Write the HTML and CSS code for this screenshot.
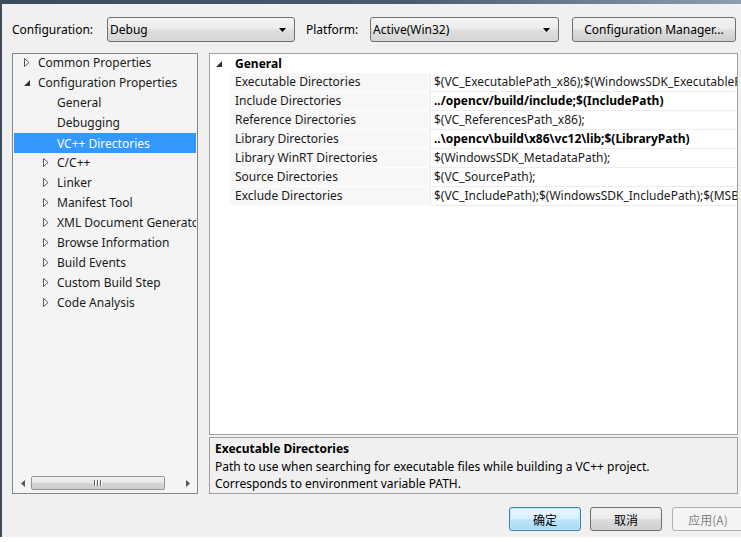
FILE: index.html
```html
<!DOCTYPE html>
<html>
<head>
<meta charset="utf-8">
<link rel="stylesheet" href="styles.css">
</head>
<body>
<div class="titlebar"></div>
<div class="frame">
  <div class="toolbar">
    <span class="lbl lbl-config">Configuration:</span>
    <div class="combo combo-config"><span class="combo-text">Debug</span><svg class="combo-arrow" width="7" height="4" viewBox="0 0 7 4"><polygon points="0,0 7,0 3.5,4" fill="#000"/></svg></div>
    <span class="lbl lbl-platform">Platform:</span>
    <div class="combo combo-platform"><span class="combo-text">Active(Win32)</span><svg class="combo-arrow" width="7" height="4" viewBox="0 0 7 4"><polygon points="0,0 7,0 3.5,4" fill="#000"/></svg></div>
    <div class="btn btn-cfgmgr">Configuration Manager...</div>
  </div>
  <div class="main">
    <div class="tree">
      <ul class="tree-list">
        <li class="node lvl0"><svg class="exp" width="6" height="9" viewBox="0 0 6 9"><polygon points="0.5,0.5 5,4.5 0.5,8.5" fill="#fff" stroke="#555"/></svg>Common Properties</li>
        <li class="node lvl0"><svg class="exp" width="6" height="9" viewBox="0 0 6 9"><polygon points="6,2 6,8 0,8" fill="#333"/></svg>Configuration Properties</li>
        <li class="node lvl1 leaf">General</li>
        <li class="node lvl1 leaf">Debugging</li>
        <li class="node lvl1 leaf selected">VC++ Directories</li>
        <li class="node lvl1"><svg class="exp" width="6" height="9" viewBox="0 0 6 9"><polygon points="0.5,0.5 5,4.5 0.5,8.5" fill="#fff" stroke="#555"/></svg>C/C++</li>
        <li class="node lvl1"><svg class="exp" width="6" height="9" viewBox="0 0 6 9"><polygon points="0.5,0.5 5,4.5 0.5,8.5" fill="#fff" stroke="#555"/></svg>Linker</li>
        <li class="node lvl1"><svg class="exp" width="6" height="9" viewBox="0 0 6 9"><polygon points="0.5,0.5 5,4.5 0.5,8.5" fill="#fff" stroke="#555"/></svg>Manifest Tool</li>
        <li class="node lvl1"><svg class="exp" width="6" height="9" viewBox="0 0 6 9"><polygon points="0.5,0.5 5,4.5 0.5,8.5" fill="#fff" stroke="#555"/></svg>XML Document Generator</li>
        <li class="node lvl1"><svg class="exp" width="6" height="9" viewBox="0 0 6 9"><polygon points="0.5,0.5 5,4.5 0.5,8.5" fill="#fff" stroke="#555"/></svg>Browse Information</li>
        <li class="node lvl1"><svg class="exp" width="6" height="9" viewBox="0 0 6 9"><polygon points="0.5,0.5 5,4.5 0.5,8.5" fill="#fff" stroke="#555"/></svg>Build Events</li>
        <li class="node lvl1"><svg class="exp" width="6" height="9" viewBox="0 0 6 9"><polygon points="0.5,0.5 5,4.5 0.5,8.5" fill="#fff" stroke="#555"/></svg>Custom Build Step</li>
        <li class="node lvl1"><svg class="exp" width="6" height="9" viewBox="0 0 6 9"><polygon points="0.5,0.5 5,4.5 0.5,8.5" fill="#fff" stroke="#555"/></svg>Code Analysis</li>
      </ul>
      <div class="hscroll">
        <div class="sarrow"><svg width="4" height="7" viewBox="0 0 4 7"><polygon points="4,0 4,7 0,3.5" fill="#555"/></svg></div>
        <div class="strack"><div class="sthumb"><span class="grip"></span><span class="grip"></span><span class="grip"></span></div></div>
        <div class="sarrow"><svg width="4" height="7" viewBox="0 0 4 7"><polygon points="0,0 0,7 4,3.5" fill="#555"/></svg></div>
      </div>
    </div>
    <div class="right">
      <div class="grid">
        <div class="cat"><svg class="cat-exp" width="6" height="6" viewBox="0 0 6 6"><polygon points="6,0 6,6 0,6" fill="#333"/></svg><span>General</span></div>
        <div class="row"><div class="name">Executable Directories</div><div class="val">$(VC_ExecutablePath_x86);$(WindowsSDK_ExecutablePath);$(VS_ExecutablePath)</div></div>
        <div class="row"><div class="name">Include Directories</div><div class="val bold">../opencv/build/include;$(IncludePath)</div></div>
        <div class="row"><div class="name">Reference Directories</div><div class="val">$(VC_ReferencesPath_x86);</div></div>
        <div class="row"><div class="name">Library Directories</div><div class="val bold">..\opencv\build\x86\vc12\lib;$(LibraryPath)</div></div>
        <div class="row"><div class="name">Library WinRT Directories</div><div class="val">$(WindowsSDK_MetadataPath);</div></div>
        <div class="row"><div class="name">Source Directories</div><div class="val">$(VC_SourcePath);</div></div>
        <div class="row"><div class="name">Exclude Directories</div><div class="val">$(VC_IncludePath);$(WindowsSDK_IncludePath);$(MSBuild_ExecutablePath)</div></div>
      </div>
      <div class="desc">
        <div class="desc-title">Executable Directories</div>
        <div class="desc-text">Path to use when searching for executable files while building a VC++ project.</div>
        <div class="desc-text">Corresponds to environment variable PATH.</div>
      </div>
    </div>
  </div>
  <div class="footer">
    <div class="btn btn-ok">确定</div>
    <div class="btn btn-cancel">取消</div>
    <div class="btn btn-apply disabled">应用(A)</div>
  </div>
</div>
<div class="bottom"></div>
</body>
</html>
```

FILE: styles.css
```css
* { box-sizing: border-box; }
html, body {
  margin: 0;
  padding: 0;
}
body {
  width: 741px;
  height: 542px;
  overflow: hidden;
  background: #f0f0f0;
  font-family: "Noto Sans", "Noto Sans CJK SC", sans-serif;
  font-size: 12px;
  color: #000;
}
.titlebar {
  height: 4px;
  background: linear-gradient(90deg, #3b4a5c 0%, #4a5b70 55%, #8e9db0 100%);
}
.frame {
  height: 533px;
  border-left: 2px solid #3f4b59;
  padding-left: 10px;
  overflow: hidden;
}
.toolbar {
  display: flex;
  align-items: center;
  margin-top: 13px;
  height: 25px;
}
.lbl { white-space: nowrap; }
.lbl-config { width: 95px; }
.lbl-platform { width: 64px; margin-left: 11px; }
.combo {
  height: 25px;
  border: 1px solid #707070;
  border-radius: 3px;
  background: linear-gradient(#f4f4f4 0%, #ebebeb 48%, #dedede 52%, #d6d6d6 100%);
  display: flex;
  align-items: center;
  padding-left: 2px;
  padding-right: 8px;
}
.combo-text { flex: 1; }
.combo-config { width: 188px; }
.combo-platform { width: 189px; }
.combo-arrow { display: block; }
.btn {
  height: 25px;
  border: 1px solid #707070;
  border-radius: 3px;
  background: linear-gradient(#f2f2f2 0%, #ebebeb 48%, #dddddd 52%, #cfcfcf 100%);
  display: flex;
  align-items: center;
  justify-content: center;
  white-space: nowrap;
}
.btn-cfgmgr { width: 164px; margin-left: 13px; }

.main {
  display: flex;
  margin-top: 11px;
  height: 441px;
}
.tree {
  width: 186px;
  border: 1px solid #828790;
  background: #f4f4f4;
  display: flex;
  flex-direction: column;
  padding: 0 1px 1px 1px;
}
.tree-list {
  list-style: none;
  margin: -2px 0 0 0;
  padding: 0;
  flex: 1;
  overflow: hidden;
}
.node {
  height: 20px;
  display: flex;
  align-items: center;
  white-space: nowrap;
  overflow: hidden;
  color: #1a1a1a;
}
.node .exp { flex: none; margin-right: 8px; }
.lvl0 { padding-left: 10px; }
.lvl1 { padding-left: 29px; }
.lvl1.leaf { padding-left: 43px; }
.node.selected {
  background: #3399ff;
  color: #fff;
  margin-top: 1px;
  margin-bottom: -1px;
}
.hscroll {
  height: 16px;
  display: flex;
  align-items: center;
  margin-bottom: 1px;
}
.sarrow {
  width: 17px;
  height: 16px;
  display: flex;
  align-items: center;
  justify-content: center;
}
.strack { flex: 1; height: 16px; padding: 1px 0; }
.sthumb {
  width: 134px;
  height: 14px;
  border: 1px solid #959595;
  border-radius: 2px;
  background: linear-gradient(#f3f3f3, #e4e4e4 50%, #d4d4d4 51%, #cfcfcf);
  display: flex;
  justify-content: center;
  align-items: center;
  gap: 1px;
}
.grip { height: 6px; background: #666; border-right: 1px solid #fff; width: 2px; }

.right {
  margin-left: 11px;
  width: 529px;
  display: flex;
  flex-direction: column;
}
.grid {
  height: 382px;
  border: 1px solid #a0a0a0;
  background: #fff;
}
.cat {
  height: 19px;
  display: flex;
  align-items: center;
  font-weight: bold;
}
.cat-exp { margin-left: 6px; margin-right: 13px; }
.row {
  display: flex;
  height: 19px;
  margin-left: 20px;
}
.name {
  width: 200px;
  flex: none;
  background: #f7f7f7;
  border-bottom: 1px solid #fff;
  padding-left: 5px;
  line-height: 18px;
  white-space: nowrap;
  overflow: hidden;
  color: #1a1a1a;
}
.val {
  flex: 1;
  border-left: 1px solid #ececec;
  border-bottom: 1px solid #ececec;
  padding-left: 3px;
  line-height: 18px;
  white-space: nowrap;
  overflow: hidden;
  color: #1a1a1a;
}
.val.bold { font-weight: bold; color: #000; }
.desc {
  margin-top: 2px;
  height: 57px;
  border: 1px solid #a0a0a0;
  background: #f0f0f0;
  padding: 2px 5px;
  line-height: 17px;
  white-space: nowrap;
  overflow: hidden;
}
.desc-title { font-weight: bold; margin-bottom: 1px; }

.footer {
  display: flex;
  justify-content: flex-end;
  margin-top: 13px;
  margin-right: -3px;
}
.footer .btn {
  width: 72px;
  height: 24px;
  font-family: "Noto Sans CJK SC", sans-serif;
}
.btn-cancel { margin-left: 9px; }
.btn-ok {
  border-color: #3c7fb1;
  background: linear-gradient(#eaf6fd 0%, #d9f0fc 48%, #bee6fd 52%, #a7d9f5 100%);
  box-shadow: inset 0 0 0 1px #c8e8f8;
}
.btn-apply.disabled {
  border-color: #adb2b5;
  background: #f4f4f4;
  color: #838383;
  margin-left: 10px;
}
.bottom {
  height: 5px;
  background: #fff;
}
```
